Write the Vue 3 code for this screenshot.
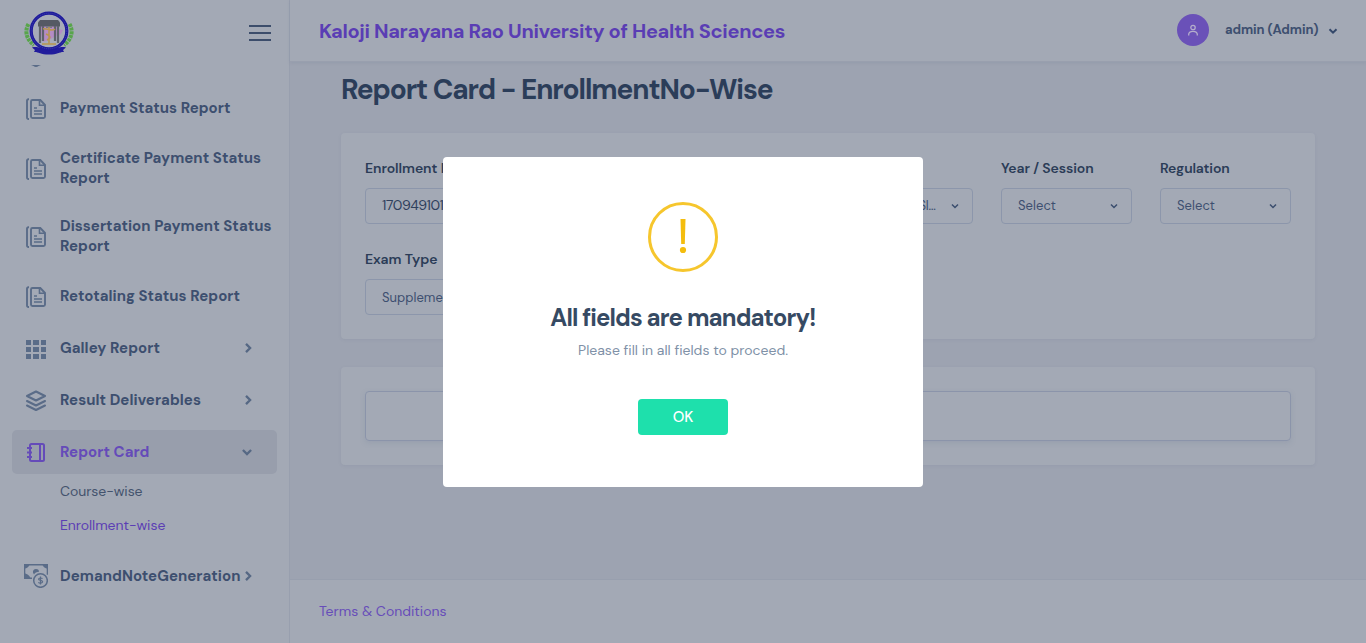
<script setup>
import { nextTick } from 'vue'

// Tracks a label so that it fills the width given in pixels.
const vFit = {
  mounted(el, binding) {
    nextTick(() => {
      const n = el.textContent.length
      const w = el.getBoundingClientRect().width
      el.style.letterSpacing = `${(binding.value - w) / n}px`
    })
  },
}

const menu = [
  { icon: 'doc', lines: [['Payment Status Report', 170.5]] },
  { icon: 'doc', lines: [['Certificate Payment Status', 200.5], ['Report', 49.7]] },
  { icon: 'doc', lines: [['Dissertation Payment Status', 211.5], ['Report', 49.7]] },
  { icon: 'doc', lines: [['Retotaling Status Report', 180]] },
  { icon: 'grid', lines: [['Galley Report', 100]], arrow: 'right' },
  { icon: 'layers', lines: [['Result Deliverables', 141]], arrow: 'right' },
  {
    icon: 'book', lines: [['Report Card', 89.5]], arrow: 'down', active: true,
    children: [{ text: 'Course-wise', w: 82.5 }, { text: 'Enrollment-wise', w: 105.3, active: true }],
  },
  { icon: 'money', lines: [['DemandNoteGeneration', 180.5]], arrow: 'right' },
]

const fields = [
  { label: 'Enrollment No', lw: 94, value: '170949101', vw: 61.5, input: true },
  { label: 'Course', lw: 50, value: 'Select', vw: 38 },
  { label: 'Semester', lw: 64, value: 'Select', vw: 38 },
  { label: 'Exam Slot', lw: 66, value: 'Exam Slot Sl…', vw: 76.5 },
  { label: 'Year / Session', lw: 92.5, value: 'Select', vw: 38 },
  { label: 'Regulation', lw: 69.5, value: 'Select', vw: 38 },
  { label: 'Exam Type', lw: 72.5, value: 'Supplement…', vw: 81, second: true },
]
</script>

<template>
  <div class="page">
    <aside class="sidebar">
      <div class="brand">
        <svg class="logo" width="50" height="46" viewBox="0 0 50 46">
          <g fill="none" stroke="#58a54b" stroke-width="4" stroke-dasharray="3 .8">
            <path d="M4.500 13C0 21 3 29 10 34" />
            <path d="M45.500 13c4.500 8 1.500 16-5.500 21" />
          </g>
          <path d="M8 36.500c5-1.500 8 1 17 1s12-2.500 17-1l-3 2.500 1 2c-4-.5-6 2.500-15 2.500S14 40.500 10 41l1-2z" fill="#211c9c" />
          <circle cx="25" cy="20" r="17.800" fill="#a6abb9" stroke="#1e1a9c" stroke-width="3.200" />
          <circle cx="25" cy="20" r="15.400" fill="none" stroke="#a6abb9" stroke-width="1" />
          <circle cx="25" cy="20" r="17.800" fill="none" stroke="#6068b0" stroke-width=".5" stroke-dasharray="1 1" />
          <path d="M17 13l5-4 5 2 4 3 3 4 5 1-2 4-5 2-7 4-6 2-2-8z" fill="#b48cc4" />
          <path d="M14 11.500l2-2.500h18l2 2.500v4H14z" fill="#555964" />
          <path d="M16 15v17M19 15v15M31 15v15M34 15v17" stroke="#5f636d" stroke-width="2.200" />
          <path d="M22 16h6" stroke="#777984" stroke-width="2" />
          <path d="M25 16v17M19 18c4-1 9 3 12 0M22 23c5 2 5 4 1 6M18 33h14" fill="none" stroke="#b8964e" stroke-width="1.500" />
        </svg>
        <svg class="burger" width="22" height="18" viewBox="0 0 22 18" fill="#3c4d6b">
          <path d="M0 1h22v2H0zM0 8h22v2H0zM0 15h22v2H0z" />
        </svg>
      </div>
      <nav class="menu">
        <svg class="tail" width="10" height="2" viewBox="0 0 10 2"><path d="M0 0h10C8 .2 7 2 5 2S2 .2 0 0z" fill="#5a6c88" /></svg>
        <template v-for="(item, i) in menu" :key="i">
          <div class="item" :class="{ active: item.active, tall: item.lines.length > 1 }">
            <span class="ico">
              <svg v-if="item.icon === 'doc'" width="24" height="24" viewBox="0 0 24 24" fill="none" stroke="currentColor" stroke-width="1.900">
                <path d="M5 2.200H4.400A1.400 1.400 0 0 0 3 3.600v17a1.400 1.400 0 0 0 1.400 1.400H5" />
                <path d="M8.500 3h7.800L21 8v11.500a1.500 1.500 0 0 1-1.500 1.500h-11A1.500 1.500 0 0 1 7 19.500v-15A1.500 1.500 0 0 1 8.500 3z" />
                <path d="M15.500 3v5.200H21M10 11h3M10 14h8M10 17h8" stroke-width="1.600" />
              </svg>
              <svg v-else-if="item.icon === 'grid'" width="24" height="24" viewBox="0 0 24 24" fill="currentColor">
                <path d="M2 3h5v5H2zM9 3h6v5H9zM17 3h5v5h-5zM2 10h5v5H2zM9 10h6v5H9zM17 10h5v5h-5zM2 17h5v5H2zM9 17h6v5H9zM17 17h5v5h-5z" />
              </svg>
              <svg v-else-if="item.icon === 'layers'" width="24" height="24" viewBox="0 0 24 24" fill="none" stroke="currentColor" stroke-width="2.100" stroke-linejoin="round" stroke-linecap="round">
                <path d="M12 2.500l9 4.500-9 4.500L3 7zM3 12l9 4.500 9-4.500M3 16.500l9 4.500 9-4.500" />
              </svg>
              <svg v-else-if="item.icon === 'book'" width="24" height="24" viewBox="0 0 24 24" fill="none" stroke="currentColor" stroke-width="2">
                <rect x="6" y="3" width="14" height="17" rx="1.500" />
                <path d="M16 3v17M3 7h5M3 11.500h5M3 16h5" />
              </svg>
              <svg v-else class="money" width="24" height="24" viewBox="0 0 24 24" fill="none" stroke="currentColor">
                <path d="M8 14.300H.6V.8h22.800v10" stroke-width="1.400" />
                <path d="M0 0h5.500c0 2.500-2.500 4.500-5.500 4.500zM24 0h-5.500c0 2.500 2.500 4.500 5.500 4.500zM0 15h6.500c0-3-3-5.500-6.500-5.500z" fill="currentColor" stroke="none" />
                <path d="M9 8.800C8.600 6.500 10 5 12 5s3.200 1.300 3 2.800C12.600 8 11 8.800 10 10.500z" fill="currentColor" stroke="none" />
                <circle cx="16.500" cy="16.500" r="6.800" stroke-width="1.500" />
                <path d="M18.500 14.600c-.6-.8-3.900-1-3.900.6 0 1.700 4 .8 4 2.600 0 1.700-3.500 1.500-4.200.5M16.500 12.500v8" stroke-width="1.200" />
              </svg>
            </span>
            <span class="name">
              <span v-for="line in item.lines" :key="line[0]" class="line"><span v-fit="line[1]" class="t">{{ line[0] }}</span></span>
            </span>
            <svg v-if="item.arrow" class="arrow" :class="item.arrow" width="10" height="10" viewBox="0 0 10 10" fill="none" stroke="#566884" stroke-width="2.300">
              <path :d="item.arrow === 'right' ? 'M3 .9L7.100 5 3 9.100' : 'M.900 3L5 7.100 9.100 3'" />
            </svg>
          </div>
          <div v-if="item.children" class="children">
            <div v-for="c in item.children" :key="c.text" class="child" :class="{ active: c.active }"><span v-fit="c.w" class="t">{{ c.text }}</span></div>
          </div>
        </template>
      </nav>
    </aside>

    <section class="main">
      <header class="top">
        <div class="uni"><span v-fit="466" class="t">Kaloji Narayana Rao University of Health Sciences</span></div>
        <div class="user">
          <span class="avatar">
            <svg width="12" height="12" viewBox="0 0 12 12" fill="none" stroke="#b4adcb" stroke-width="1.300"><circle cx="6" cy="3.500" r="2.200" /><path d="M1.700 11.500V10.500c0-1.900 1.500-3.200 4.300-3.200s4.300 1.300 4.300 3.200v1" /></svg>
          </span>
          <span class="uname"><span v-fit="93.5" class="t">admin (Admin)</span></span>
          <svg class="chev" width="10" height="10" viewBox="0 0 10 10" fill="none" stroke="#34486a" stroke-width="2"><path d="M1.500 3.200L5 6.700l3.500-3.500" /></svg>
        </div>
      </header>
      <main class="content">
        <h3 class="heading"><span v-fit="431.5" class="t">Report Card - EnrollmentNo-Wise</span></h3>
        <div class="card form">
          <div v-for="f in fields" :key="f.label" class="field">
            <label><span v-fit="f.lw" class="t">{{ f.label }}</span></label>
            <div class="control" :class="{ input: f.input, second: f.second }">
              <span v-fit="f.vw" class="t">{{ f.value }}</span>
              <svg v-if="!f.input" class="caret" width="8" height="8" viewBox="0 0 8 8" fill="none" stroke="#3b4e6e" stroke-width="1.500"><path d="M1 2.500l3 3 3-3" /></svg>
            </div>
          </div>
        </div>
        <div class="card result"><div class="box"></div></div>
      </main>
      <footer class="foot"><span v-fit="127.5" class="t">Terms &amp; Conditions</span></footer>
    </section>

    <div class="overlay">
      <div class="modal">
        <svg class="warn" width="70" height="70" viewBox="0 0 70 70">
          <circle cx="35" cy="35" r="33.500" fill="none" stroke="#f6c62d" stroke-width="3" />
          <path d="M32.500 17h5l-.7 25h-3.600z" fill="#f4bd0e" />
          <circle cx="35" cy="48" r="3.100" fill="#f4bd0e" />
        </svg>
        <h2><span v-fit="264.5" class="t">All fields are mandatory!</span></h2>
        <p><span v-fit="209.500" class="t">Please fill in all fields to proceed.</span></p>
        <button><span v-fit="20.5" class="t">OK</span></button>
      </div>
    </div>
  </div>
</template>

<style>
html, body { margin: 0; overflow: hidden; }
</style>

<style scoped>
* { box-sizing: border-box; }
.page {
  display: flex; width: 1366px; height: 643px; overflow: hidden; background: #9da3b1;
  font-family: "DM Sans", Inter, "Liberation Sans", sans-serif; font-size: 14px; color: #3d4f6f;
  font-optical-sizing: none;
}
.t { display: inline-block; white-space: nowrap; }
.sidebar { width: 290px; height: 643px; flex: none; background: #a3a9b5; border-right: 1px solid #989fae; }
.brand { height: 65px; display: flex; align-items: center; justify-content: space-between; padding: 0 18px 0 24px; }
.logo { margin-top: 3px; }
.burger { display: block; margin-top: 1px; }
.menu { padding: 0 12px; }
.tail { display: block; margin: 0 0 19px 19px; }
.item { height: 44px; margin-bottom: 8px; padding: 0 20px 0 12px; display: flex; align-items: center; border-radius: 5px; }
.item.tall { height: 60px; }
.item.active { background: #989eac; color: #654bb9; margin-bottom: 0; }
.ico { width: 36px; height: 24px; flex: none; color: #5a6c88; margin-top: 2px; }
.ico svg { display: block; }
.active .ico { color: #654bb9; }
.ico .money { margin-top: -1px; }
.name { width: 181px; flex: none; font-size: 15px; font-weight: 700; }
.line { display: block; height: 20px; line-height: 20px; }
.arrow { margin-left: 2px; }
.arrow.down { margin-left: 1px; }
.children { margin-bottom: 12px; padding-left: 48px; }
.child { height: 34px; line-height: 34px; font-size: 14px; color: #43536d; }
.child.active { color: #5b3eb4; }
.main { flex: 1; display: flex; flex-direction: column; }
.top { height: 62px; flex: none; display: flex; align-items: center; justify-content: space-between; padding: 0 28px 0 29px; background: #a3a9b5; border-bottom: 1px solid #999fae; box-shadow: 0 1px 3px rgba(110, 120, 145, .2); }
.uni { font-size: 20px; font-weight: 700; color: #5a3db4; }
.user { display: flex; align-items: center; padding-bottom: 2px; }
.avatar { width: 32px; height: 32px; border-radius: 50%; background: #6a51b8; display: flex; align-items: center; justify-content: center; margin-right: 16px; }
.uname { font-size: 13px; font-weight: 700; margin-right: 9px; width: 94px; }
.chev { margin-top: 2px; }
.content { flex: 1; padding: 8px 51px 0; }
.heading { margin: 0 0 27px; height: 36px; line-height: 40px; font-size: 28px; font-weight: 700; color: #2b3d59; }
.card { background: #a3a9b5; border-radius: 4px; box-shadow: 0 1px 3px rgba(110, 120, 145, .15); padding: 24px; }
.form { height: 206px; display: grid; grid-template-columns: repeat(6, 131px); column-gap: 28px; row-gap: 24px; align-content: start; margin-bottom: 28px; }
.field label { display: block; height: 23px; line-height: 23px; margin-bottom: 8px; font-size: 14px; font-weight: 600; color: #2b3c57; }
.control { height: 36px; border: 1px solid #8c96ab; border-radius: 4px; padding: 0 12px 0 16px; display: flex; align-items: center; justify-content: space-between; font-size: 13px; color: #3d4f70; }
.control .t { margin-bottom: 2px; }
.control.second .t { margin-bottom: 0; }
.control.input { color: #2f405d; font-size: 14px; }
.caret { margin-right: 1px; }
.result { height: 98px; }
.box { height: 50px; border: 1px solid #8b94aa; border-radius: 4px; box-shadow: 0 2px 5px rgba(120, 130, 155, .25); }
.foot { height: 64px; line-height: 63px; padding-left: 29px; background: #a3a9b5; border-top: 1px solid #989fae; font-size: 14px; color: #674db9; }
.overlay { position: absolute; left: 0; top: 0; width: 1366px; height: 643px; display: flex; align-items: center; justify-content: center; }
.modal { width: 480px; height: 330px; margin-top: 1px; background: #fff; border-radius: 4px; padding-top: 45px; display: flex; flex-direction: column; align-items: center; }
.warn { flex: none; }
h2 { margin: 30px 0 0; height: 32px; line-height: 32px; font-size: 24px; font-weight: 700; color: #364a63; }
p { margin: 4px 0 0; height: 24px; line-height: 24px; font-size: 14px; color: #8091a7; }
button { margin-top: 37px; width: 90px; height: 36px; border: 0; border-radius: 4px; padding: 0; background: #1ee0ac; color: #fff; font: 500 15px "DM Sans", Inter, sans-serif; }
</style>
